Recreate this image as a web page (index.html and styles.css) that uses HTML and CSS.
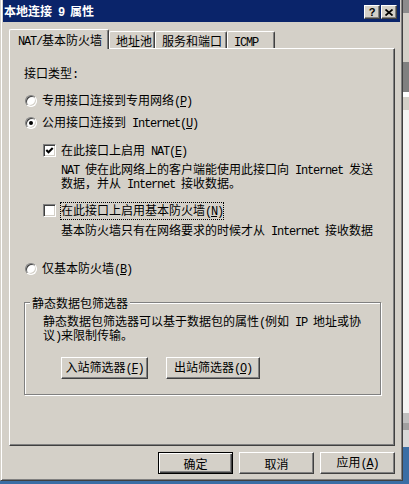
FILE: index.html
```html
<!DOCTYPE html>
<html lang="zh-CN">
  <head>
    <meta charset="UTF-8" />
    <meta name="viewport" content="width=device-width, initial-scale=1.0" />
    <title>本地连接 9 属性</title>

    <link rel="stylesheet" href="styles.css">
  </head>
  <body>
    <div class="desktop">
      <!-- Dialog window -->
      <div class="dialog">
        <div class="titlebar">
          <span class="title">本地连接<span class="en"> 9 </span>属性</span>
          <div class="caption-buttons">
            <span class="cap-btn">?</span>
            <span class="cap-btn">
              <svg width="8" height="7" viewBox="0 0 8 7"><path d="M0.5 0.5L7.5 6.5M7.5 0.5L0.5 6.5" stroke="#000" stroke-width="1.7" fill="none"/></svg>
            </span>
          </div>
        </div>

        <!-- Tabs -->
        <div class="tabs">
          <div class="tab active tab-nat"><span class="en">NAT/</span>基本防火墙</div>
          <div class="tab tab-pool">地址池</div>
          <div class="tab tab-svc">服务和端口</div>
          <div class="tab tab-icmp"><span class="en">ICMP</span></div>
        </div>

        <div class="panel">
          <div class="section-label">接口类型<span class="en">:</span></div>

          <div class="row opt-private">
            <span class="radio"></span>
            <span>专用接口连接到专用网络<span class="en">(<u>P</u>)</span></span>
          </div>
          <div class="row opt-public">
            <span class="radio on"></span>
            <span>公用接口连接到<span class="en"> Internet(<u>U</u>)</span></span>
          </div>

          <div class="row sub opt-nat">
            <span class="checkbox">
              <svg width="13" height="13" viewBox="0 0 13 13"><polyline points="3.3,6 5.5,8.2 9.7,4" stroke="#000" stroke-width="2.1" fill="none"/></svg>
            </span>
            <span>在此接口上启用<span class="en"> NAT(<u>E</u>)</span></span>
          </div>
          <div class="desc desc-nat">
            <span class="en">NAT </span>使在此网络上的客户端能使用此接口向<span class="en"> Internet </span>发送<br>
            数据，并从<span class="en"> Internet </span>接收数据。
          </div>

          <div class="row sub opt-fw">
            <span class="checkbox"></span>
            <span class="focused">在此接口上启用基本防火墙<span class="en">(<u>N</u>)</span></span>
          </div>
          <div class="desc desc-fw">
            基本防火墙只有在网络要求的时候才从<span class="en"> Internet </span>接收数据
          </div>

          <div class="row opt-only">
            <span class="radio"></span>
            <span>仅基本防火墙<span class="en">(<u>B</u>)</span></span>
          </div>

          <!-- Static packet filters -->
          <div class="group">
            <span class="group-title">静态数据包筛选器</span>
            <div class="group-desc">
              静态数据包筛选器可以基于数据包的属性<span class="en">(</span>例如<span class="en"> IP </span>地址或协<br>
              议<span class="en">)</span>来限制传输。
            </div>
            <div class="group-actions">
              <button class="btn btn-in">入站筛选器<span class="en">(<u>F</u>)</span></button>
              <button class="btn btn-out">出站筛选器<span class="en">(<u>O</u>)</span></button>
            </div>
          </div>
        </div>

        <div class="footer">
          <button class="btn default">确定</button>
          <button class="btn">取消</button>
          <button class="btn">应用<span class="en">(<u>A</u>)</span></button>
        </div>
      </div>

      <div class="edge"></div>
    </div>
  </body>
</html>
```

FILE: styles.css
```css
body {
  margin: 0;
  width: 409px;
  height: 484px;
  overflow: hidden;
  background-color: #3A6EA5;
  font-family: "Noto Sans CJK SC", sans-serif;
  font-size: 12px;
  color: #000;
}

.desktop {
  display: flex;
  align-items: flex-start;
}

/* Half width latin text, 6px per char like the system font */
.en {
  font-family: "Liberation Mono", monospace;
  font-size: 12px;
  letter-spacing: -1.2px;
}

/* Window frame */
.dialog {
  width: 403px;
  height: 481px;
  box-sizing: border-box;
  background-color: #D4D0C8;
  border: 1px solid;
  border-top: 0;
  border-color: #D4D0C8 #404040 #404040 #D4D0C8;
  box-shadow: inset 1px 0 #fff, inset -1px -1px #808080;
  padding: 0 2px 2px 2px;
  display: flex;
  flex-direction: column;
}

.titlebar {
  height: 22px;
  box-sizing: border-box;
  padding: 2px 3px 0 1px;
  background-color: #0A246A;
  display: flex;
  align-items: center;
  justify-content: space-between;
}

.title {
  color: white;
  font-weight: bold;
  line-height: 13px;
}

.caption-buttons {
  display: flex;
  gap: 1px;
}

.cap-btn {
  width: 16px;
  height: 14px;
  box-sizing: border-box;
  background-color: #D4D0C8;
  border: 1px solid;
  border-color: #fff #404040 #404040 #fff;
  box-shadow: inset -1px -1px #808080;
  display: flex;
  align-items: center;
  justify-content: center;
  font-family: "Liberation Sans", sans-serif;
  font-weight: bold;
  font-size: 11px;
  line-height: 11px;
}

/* Tabs */
.tabs {
  display: flex;
  align-items: flex-end;
  height: 19px;
  margin: 7px 5px 0 6px;
  position: relative;
  z-index: 1;
}

.tab {
  height: 17px;
  box-sizing: border-box;
  border: 1px solid;
  border-bottom: 0;
  border-color: #fff #404040 #fff #fff;
  border-radius: 2px 2px 0 0;
  box-shadow: inset -1px 0 #808080;
  padding: 2px 0 0 6px;
  line-height: 13px;
  white-space: nowrap;
}

.tab.active {
  height: 20px;
  margin-bottom: -1px;
  padding: 3px 0 0 8px;
  background-color: #D4D0C8;
}

.tab-nat { width: 100px; }
.tab-pool { width: 46px; }
.tab-svc { width: 72px; }
.tab-icmp { width: 48px; }

.panel {
  height: 398px;
  box-sizing: border-box;
  margin: 0 5px 0 6px;
  border: 1px solid;
  border-color: #fff #404040 #404040 #fff;
  box-shadow: inset -1px -1px #808080;
  padding: 17px 14px 0 14px;
}

.section-label {
  line-height: 13px;
}

.row {
  display: flex;
  align-items: center;
  gap: 5px;
  height: 13px;
  line-height: 13px;
  white-space: nowrap;
}

.row.sub {
  margin-left: 19px;
}

.opt-private { margin-top: 12px; padding-left: 1px; }
.opt-public { margin-top: 9px; padding-left: 1px; }
.opt-nat { margin-top: 15px; }
.opt-fw { margin-top: 13px; }
.opt-only { margin-top: 24px; padding-left: 1px; }

.desc {
  margin-left: 37px;
  line-height: 12px;
  white-space: nowrap;
}

.desc-nat { margin-top: 6px; }
.desc-fw { margin-top: 7px; }

.focused {
  outline: 1px dotted #000;
}

/* Radio and checkbox, classic sunken look */
.radio {
  width: 12px;
  height: 12px;
  flex: none;
  box-sizing: border-box;
  border-radius: 50%;
  border: 1px solid;
  border-color: #808080 #fff #fff #808080;
  background-color: #fff;
  box-shadow: inset 1px 1px #404040, inset -1px -1px #D4D0C8;
  position: relative;
}

.radio.on::after {
  content: "";
  position: absolute;
  left: 3px;
  top: 3px;
  width: 4px;
  height: 4px;
  border-radius: 50%;
  background-color: #000;
}

.checkbox {
  width: 13px;
  height: 13px;
  flex: none;
  box-sizing: border-box;
  border: 1px solid;
  border-color: #808080 #fff #fff #808080;
  background-color: #fff;
  box-shadow: inset 1px 1px #404040, inset -1px -1px #D4D0C8;
}

.checkbox svg {
  display: block;
  margin: -1px;
}

/* Group box */
.group {
  position: relative;
  width: 357px;
  box-sizing: border-box;
  margin-top: 27px;
  border: 1px solid #808080;
  box-shadow: inset 1px 1px #fff, 1px 1px #fff;
  padding: 12px 0 15px 18px;
}

.group-title {
  position: absolute;
  top: -7px;
  left: 5px;
  padding: 0 2px;
  line-height: 13px;
  background-color: #D4D0C8;
}

.group-desc {
  line-height: 12px;
  white-space: nowrap;
}

.group-actions {
  display: flex;
  gap: 18px;
  margin: 14px 0 0 18px;
}

/* Buttons */
.btn {
  width: 75px;
  height: 22px;
  box-sizing: border-box;
  padding: 0;
  background-color: #D4D0C8;
  border: 1px solid;
  border-color: #fff #404040 #404040 #fff;
  box-shadow: inset -1px -1px #808080;
  font-family: "Noto Sans CJK SC", sans-serif;
  font-size: 12px;
  line-height: 13px;
  color: #000;
  white-space: nowrap;
}

.btn.default {
  border-color: #000;
  box-shadow: inset 1px 1px #fff, inset -1px -1px #404040, inset -2px -2px #808080;
}

.btn-in { width: 87px; }
.btn-out { width: 94px; }

.footer {
  display: flex;
  justify-content: flex-end;
  gap: 6px;
  margin: 6px 5px 0 0;
}

/* Strip of the window behind */
.edge {
  width: 6px;
  height: 447px;
  background: linear-gradient(to bottom,
    #8c8c8c 0 13px,
    #D4D0C8 13px 62px,
    #808080 62px 92px,
    #fff 92px 97px,
    #D4D0C8 97px 110px,
    #f4f4f4 110px 413px,
    #c0c0c0 413px 423px,
    #a0a0a0 423px 430px,
    #d8d8d8 430px 447px);
}
```
